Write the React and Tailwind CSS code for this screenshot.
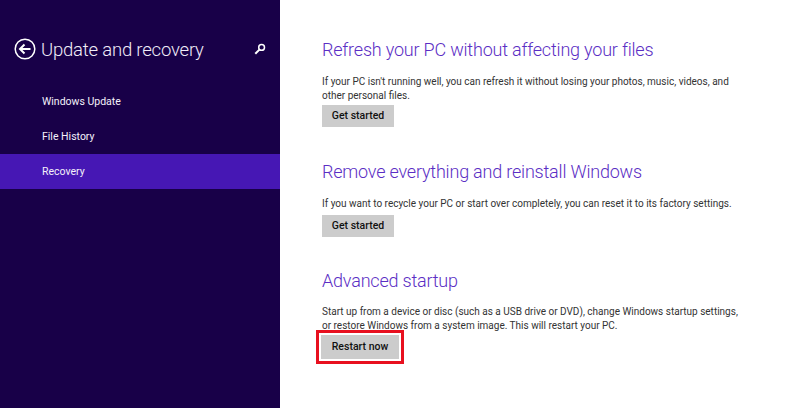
import React from 'react';

const font = "font-['Roboto',sans-serif]";

const NavItem = ({ label, active }) => (
  <div className={`h-[35px] flex items-center pl-[42px] text-[10.5px] text-[#f4f0fa] ${active ? 'bg-[#4617b4]' : ''}`}>
    {label}
  </div>
);

const Section = ({ title, children, button, highlight, className, gap = 'mt-[2px]', textGap = 'mt-[11px]' }) => (
  <section className={className}>
    <h2 className="h-[28px] text-[18px] leading-[28px] font-light tracking-[-0.2px] text-[#5b2ec4]">{title}</h2>
    <p className={`${textGap} w-[418px] text-[10px] leading-[14px] text-[#333333]`}>{children}</p>
    {highlight ? (
      <div className="-mt-[3px] -ml-[6px] w-fit border-[3px] border-[#e8101f] p-[1px]">
        <div className="border border-dotted border-white">
          <button className="block h-[24px] w-[78px] bg-[#cccccc] text-[10.5px] font-medium text-[#111111]">{button}</button>
        </div>
      </div>
    ) : (
      <button className={`${gap} block h-[22px] w-[72px] bg-[#cccccc] text-[10.5px] font-medium text-[#111111]`}>{button}</button>
    )}
  </section>
);

export default function App() {
  return (
    <div className={`flex h-[408px] w-[800px] bg-white ${font}`}>
      <aside className="w-[280px] shrink-0 bg-[#180048]">
        <div className="flex h-[84px] items-center pl-[14px] pt-[16px] text-white">
          <svg width="22" height="22" viewBox="0 0 22 22" fill="none" stroke="white" className="-mt-[3px] shrink-0">
            <circle cx="11" cy="11" r="9.8" strokeWidth="1.5" />
            <path d="M16.5 11H6M10.5 6.5 6 11l4.5 4.5" strokeWidth="2" />
          </svg>
          <h1 className="ml-[5px] w-[163px] shrink-0 whitespace-nowrap text-[18.5px] font-light leading-none tracking-[-0.2px] text-[#f0ecf8]">Update and recovery</h1>
          <svg width="12" height="12" viewBox="0 0 12 12" fill="none" stroke="white" className="-mt-[2px] ml-[50px] shrink-0">
            <circle cx="7.6" cy="4.4" r="2.9" strokeWidth="1.5" />
            <path d="M5.4 6.6 1.3 10.7" strokeWidth="2" />
          </svg>
        </div>
        <nav>
          <NavItem label="Windows Update" />
          <NavItem label="File History" />
          <NavItem label="Recovery" active />
        </nav>
      </aside>
      <main className="flex-1 pl-[42px] pt-[36px]">
        <Section title="Refresh your PC without affecting your files" button="Get started">
          If your PC isn't running well, you can refresh it without losing your photos, music, videos, and other personal files.
        </Section>
        <Section className="mt-[31px]" gap="mt-[4px]" title="Remove everything and reinstall Windows" button="Get started">
          If you want to recycle your PC or start over completely, you can reset it to its factory settings.
        </Section>
        <Section className="mt-[30px]" textGap="mt-[10px]" title="Advanced startup" button="Restart now" highlight>
          Start up from a device or disc (such as a USB drive or DVD), change Windows startup settings, or restore Windows from a system image. This will restart your PC.
        </Section>
      </main>
    </div>
  );
}
